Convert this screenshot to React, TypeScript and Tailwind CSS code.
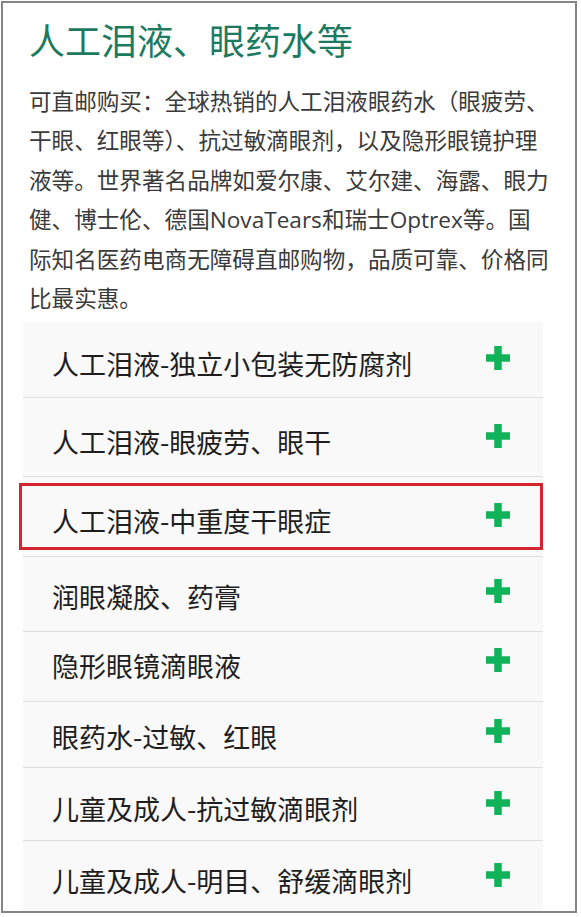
const items = [
  { label: '人工泪液-独立小包装无防腐剂', row: 'h-[76px] pt-[24px]' },
  { label: '人工泪液-眼疲劳、眼干', row: 'h-[79px] pt-[26px]' },
  { label: '人工泪液-中重度干眼症', row: 'h-[80px] pt-[26px]', active: true },
  { label: '润眼凝胶、药膏', row: 'h-[75px] pt-[22px]' },
  { label: '隐形眼镜滴眼液', row: 'h-[70px] pt-[16px]' },
  { label: '眼药水-过敏、红眼', row: 'h-[66px] pt-[17px]' },
  { label: '儿童及成人-抗过敏滴眼剂', row: 'h-[73px] pt-[23px]' },
  { label: '儿童及成人-明目、舒缓滴眼剂', row: 'h-[72px] pt-[22px]' },
]

function Plus() {
  return (
    <svg width="24" height="24" viewBox="0 0 24 24" className="shrink-0 text-[#10b25a]">
      <rect x="0" y="8.25" width="24" height="7.5" fill="currentColor" />
      <rect x="8.25" y="0" width="7.5" height="24" fill="currentColor" />
    </svg>
  )
}

export default function App() {
  return (
    <div className="bg-white p-[1px] font-['Noto_Sans_CJK_SC','Noto_Sans',sans-serif]">
      <div className="h-[912px] w-[576px] overflow-hidden border-2 border-[#858585] bg-white">
        {/* Heading + intro */}
        <div className="pt-[12px] pl-[26px]">
          <h2 className="text-[36px] leading-[48px] font-normal text-[#1c7a5f]">人工泪液、眼药水等</h2>
          {/* Open Sans first so the Latin brand names get the wider face, CJK falls through */}
          <p className="mt-[19px] w-[521px] font-['Open_Sans','Noto_Sans_CJK_SC',sans-serif] text-[22.6px] leading-[39.4px] text-[#3a3a3a]">
            可直邮购买：全球热销的人工泪液眼药水（眼疲劳、干眼、红眼等）、抗过敏滴眼剂，以及隐形眼镜护理液等。世界著名品牌如爱尔康、艾尔建、海露、眼力健、博士伦、德国NovaTears和瑞士Optrex等。国际知名医药电商无障碍直邮购物，品质可靠、价格同比最实惠。
          </p>
        </div>

        {/* Category list */}
        <div className="mt-[4px] ml-[20px] w-[520px]">
          {items.map((item) => (
            <div
              key={item.label}
              className={`relative flex items-start justify-between border-b border-[#dedede] bg-[#f9f9f9] pr-[33px] pl-[29px] ${item.row}`}
            >
              <span className="text-[27px] leading-[36px] text-[#1e1e1e]">{item.label}</span>
              <Plus />
              {item.active && (
                <div className="pointer-events-none absolute top-[6px] right-0 bottom-[6px] left-[-4px] border-[3px] border-[#d5232f]" />
              )}
            </div>
          ))}
        </div>
      </div>
    </div>
  )
}
